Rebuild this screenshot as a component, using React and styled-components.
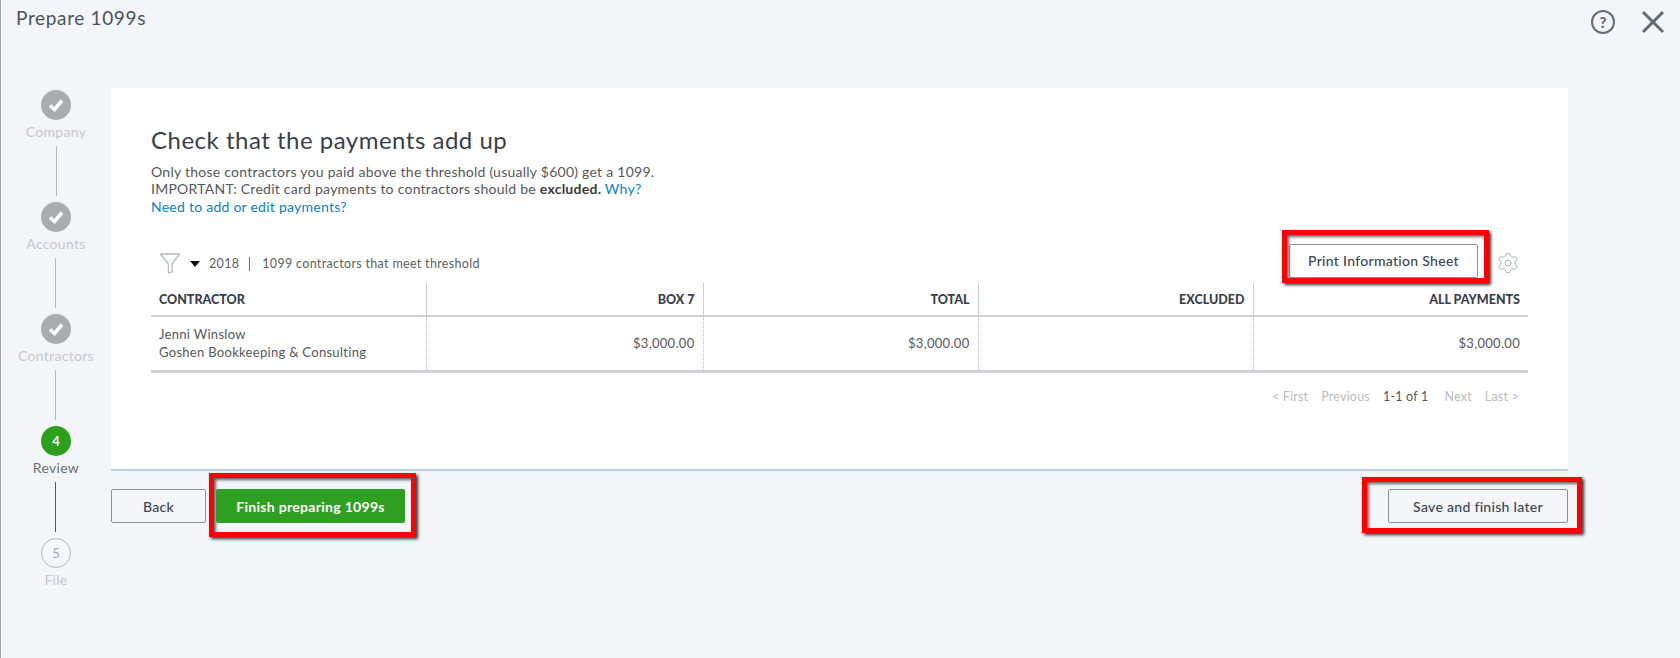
import React from "react";
import styled, { createGlobalStyle } from "styled-components";
import { Settings } from "lucide-react";

const GlobalStyle = createGlobalStyle`
  html, body {
    margin: 0;
    padding: 0;
    height: 100%;
    background: #f3f5f9;
  }
  body {
    font-family: Lato, "Open Sans", sans-serif;
    color: #393a3d;
  }
  * { box-sizing: border-box; }
`;

const Page = styled.div`
  width: 1680px;
  height: 658px;
  overflow: hidden;
  border-left: 1px solid #a8a8a8;
  background: #f3f5f9;
`;

const Header = styled.header`
  height: 88px;
  display: flex;
  justify-content: space-between;
  align-items: flex-start;
  padding: 6px 15px 0 15px;
`;

const PageTitle = styled.div`
  font-size: 19px;
  line-height: 24px;
  letter-spacing: 0.65px;
  color: #4a5460;
`;

const HeaderIcons = styled.div`
  display: flex;
  align-items: center;
  gap: 26px;
  padding-top: 4px;
`;

const HelpIcon = styled.div`
  width: 24px;
  height: 24px;
  border: 2px solid #626b78;
  border-radius: 50%;
  display: flex;
  align-items: center;
  justify-content: center;
  font-size: 15px;
  font-weight: 900;
  color: #626b78;
`;

const Body = styled.div`
  display: flex;
`;

const Stepper = styled.nav`
  width: 110px;
  padding-top: 2px;
  display: flex;
  flex-direction: column;
  align-items: center;
`;

const Step = styled.div`
  height: 112px;
  display: flex;
  flex-direction: column;
  align-items: center;
`;

const Circle = styled.div`
  width: 30px;
  height: 30px;
  flex: none;
  border-radius: 50%;
  display: flex;
  align-items: center;
  justify-content: center;
  font-size: 13px;
  background: ${(p) =>
    p.$state === "done" ? "#a9abaf" : p.$state === "active" ? "#2ca01c" : "transparent"};
  border: ${(p) => (p.$state === "todo" ? "1px solid #b4b6ba" : "none")};
  color: ${(p) => (p.$state === "active" ? "#fff" : "#a9abaf")};
  font-weight: ${(p) => (p.$state === "active" ? 700 : 400)};
`;

const StepLabel = styled.div`
  height: 26px;
  line-height: 24px;
  font-size: 14px;
  white-space: nowrap;
  letter-spacing: 0.3px;
  color: ${(p) => (p.$state === "active" ? "#6b6c72" : "#c6c7cb")};
`;

const Connector = styled.div`
  width: 1px;
  height: 50px;
  background: ${(p) => (p.$state === "active" ? "#55565a" : "#b4b6ba")};
`;

const Main = styled.main`
  width: 1457px;
`;

const Card = styled.section`
  height: 383px;
  background: #fff;
  border-bottom: 2px solid #bfcfe3;
  padding: 37px 40px 0;
`;

const Heading = styled.h1`
  margin: 0 0 8px;
  font-size: 24px;
  line-height: 30px;
  font-weight: 400;
  letter-spacing: 0.5px;
  color: #393f4a;
`;

const Intro = styled.p`
  margin: 0;
  font-size: 14px;
  line-height: 17.3px;
  letter-spacing: 0.25px;
  color: #55575c;
`;

const Strong = styled.strong`
  font-weight: 700;
  color: #393a3d;
`;

const Link = styled.a`
  color: #0a7fc9;
`;

const Toolbar = styled.div`
  display: flex;
  justify-content: space-between;
  align-items: center;
  margin-top: 29px;
  height: 34px;
  margin-bottom: 5px;
  padding-right: 8px;
`;

const FilterGroup = styled.div`
  display: flex;
  align-items: center;
  padding: 6px 0 0 8px;
  font-size: 12.5px;
  letter-spacing: 0.32px;
  color: #5c5e63;
`;

const Caret = styled.span`
  width: 0;
  height: 0;
  margin: 0 9px 0 9px;
  border-left: 5px solid transparent;
  border-right: 5px solid transparent;
  border-top: 6px solid #111;
`;

const Year = styled.span`
  padding-right: 10px;
  margin-right: 12px;
  border-right: 1px solid #777;
  line-height: 14px;
`;

const ToolbarRight = styled.div`
  display: flex;
  align-items: center;
  gap: 18px;
`;

const GearIcon = styled(Settings)`
  position: relative;
  top: 2px;
`;

const Annotated = styled.div`
  position: relative;
  display: inline-flex;
`;

const RedBox = styled.div`
  position: absolute;
  top: ${(p) => p.$top}px;
  right: ${(p) => p.$right}px;
  bottom: ${(p) => p.$bottom}px;
  left: ${(p) => p.$left}px;
  border: 5px solid #fe0000;
  box-shadow: 2px 2px 3px #333, inset 2px 2px 3px #666;
  pointer-events: none;
`;

const Button = styled.button`
  height: 34px;
  width: ${(p) => p.$width}px;
  padding: 0;
  border-radius: 2px;
  font-family: inherit;
  font-size: 14px;
  font-weight: ${(p) => (p.$primary ? 700 : 500)};
  letter-spacing: 0.3px;
  cursor: pointer;
  color: ${(p) => (p.$primary ? "#fff" : "#3a4656")};
  background: ${(p) => (p.$primary ? "#2f9f22" : "transparent")};
  border: ${(p) => (p.$primary ? "none" : "1px solid #8d9096")};
`;

const Table = styled.table`
  width: 1377px;
  table-layout: fixed;
  border-collapse: collapse;
  border-bottom: 3px solid #cfd3d8;
`;

const Th = styled.th`
  height: 33px;
  padding: 2px 8px 0;
  font-size: 12.5px;
  font-weight: 900;
  color: #393f4a;
  text-align: ${(p) => (p.$left ? "left" : "right")};
  border-bottom: 2px solid #cfd3d8;
  border-left: ${(p) => (p.$left ? "none" : "1px solid #c3d0e0")};
`;

const Td = styled.td`
  height: 56px;
  padding: 0 8px;
  font-size: 13px;
  line-height: 17.5px;
  letter-spacing: 0.3px;
  color: #55575c;
  text-align: ${(p) => (p.$left ? "left" : "right")};
  border-left: ${(p) => (p.$left ? "none" : "1px dotted #bdbdbd")};
`;

const Pagination = styled.div`
  display: flex;
  justify-content: flex-end;
  gap: 13px;
  margin-top: 15px;
  padding-right: 9px;
  font-size: 12.5px;
  line-height: 18px;
  letter-spacing: 0.2px;
  color: #b9bbc0;
`;

const PageCount = styled.span`
  color: #55575c;
  margin-right: 3px;
`;

const Footer = styled.footer`
  display: flex;
  justify-content: space-between;
  margin-top: 18px;
`;

const FooterLeft = styled.div`
  display: flex;
  gap: 10px;
`;

const CheckMark = () => (
  <svg width="18" height="16" viewBox="0 0 18 16">
    <path d="M3 8.5 L7.5 12.5 L15 3.5" fill="none" stroke="#fff" strokeWidth="3.6" />
  </svg>
);

const FilterIcon = () => (
  <svg width="22" height="21" viewBox="0 0 20 20">
    <path
      d="M1 1 H19 L12 10.5 V18 L8.5 19 V10.5 Z"
      fill="none"
      stroke="#b5bac1"
      strokeWidth="1.3"
      strokeLinejoin="round"
    />
  </svg>
);

const CloseIcon = () => (
  <svg width="24" height="24" viewBox="0 0 24 24">
    <path d="M2 2 L22 22 M22 2 L2 22" stroke="#636b76" strokeWidth="3" />
  </svg>
);

const steps = [
  { label: "Company", state: "done" },
  { label: "Accounts", state: "done" },
  { label: "Contractors", state: "done" },
  { label: "Review", state: "active", num: 4 },
  { label: "File", state: "todo", num: 5 },
];

const App = () => {
  return (
    <Page>
      <GlobalStyle />
      <Header>
        <PageTitle>Prepare 1099s</PageTitle>
        <HeaderIcons>
          <HelpIcon>?</HelpIcon>
          <CloseIcon />
        </HeaderIcons>
      </Header>
      <Body>
        <Stepper>
          {steps.map((s, i) => (
            <Step key={s.label}>
              <Circle $state={s.state}>{s.state === "done" ? <CheckMark /> : s.num}</Circle>
              <StepLabel $state={s.state}>{s.label}</StepLabel>
              {i < steps.length - 1 && <Connector $state={s.state} />}
            </Step>
          ))}
        </Stepper>
        <Main>
          <Card>
            <Heading>Check that the payments add up</Heading>
            <Intro>
              Only those contractors you paid above the threshold (usually $600) get a 1099.
              <br />
              IMPORTANT: Credit card payments to contractors should be <Strong>excluded.</Strong>{" "}
              <Link>Why?</Link>
              <br />
              <Link>Need to add or edit payments?</Link>
            </Intro>
            <Toolbar>
              <FilterGroup>
                <FilterIcon />
                <Caret />
                <Year>2018</Year>
                1099 contractors that meet threshold
              </FilterGroup>
              <ToolbarRight>
                <Annotated>
                  <Button $width={189}>Print Information Sheet</Button>
                  <RedBox $top={-14} $right={-11} $bottom={-5} $left={-7} />
                </Annotated>
                <GearIcon size={24} strokeWidth={1} color="#a9adb3" />
              </ToolbarRight>
            </Toolbar>
            <Table>
              <colgroup>
                <col width="275" />
                <col width="277" />
                <col width="275" />
                <col width="275" />
                <col width="275" />
              </colgroup>
              <thead>
                <tr>
                  <Th $left>CONTRACTOR</Th>
                  <Th>BOX 7</Th>
                  <Th>TOTAL</Th>
                  <Th>EXCLUDED</Th>
                  <Th>ALL PAYMENTS</Th>
                </tr>
              </thead>
              <tbody>
                <tr>
                  <Td $left>
                    Jenni Winslow
                    <br />
                    Goshen Bookkeeping &amp; Consulting
                  </Td>
                  <Td>$3,000.00</Td>
                  <Td>$3,000.00</Td>
                  <Td />
                  <Td>$3,000.00</Td>
                </tr>
              </tbody>
            </Table>
            <Pagination>
              <span>&lt; First</span>
              <span>Previous</span>
              <PageCount>1-1 of 1</PageCount>
              <span>Next</span>
              <span>Last &gt;</span>
            </Pagination>
          </Card>
          <Footer>
            <FooterLeft>
              <Button $width={95}>Back</Button>
              <Annotated>
                <Button $primary $width={189}>Finish preparing 1099s</Button>
                <RedBox $top={-16} $right={-11} $bottom={-14} $left={-7} />
              </Annotated>
            </FooterLeft>
            <Annotated>
              <Button $width={180}>Save and finish later</Button>
              <RedBox $top={-12} $right={-14} $bottom={-10} $left={-26} />
            </Annotated>
          </Footer>
        </Main>
      </Body>
    </Page>
  );
};

export default App;
